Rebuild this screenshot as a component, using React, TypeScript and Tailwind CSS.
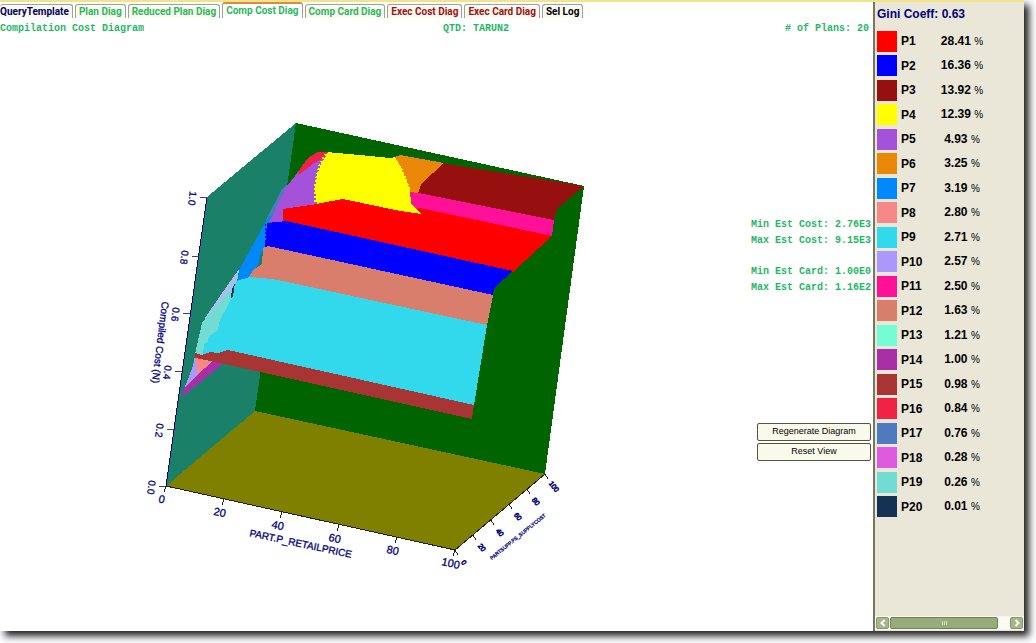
const tabs = [
  { label: "QueryTemplate", color: "text-[#000060]" },
  { label: "Plan Diag", color: "text-[#2eb85c]" },
  { label: "Reduced Plan Diag", color: "text-[#2eb85c]" },
  { label: "Comp Cost Diag", color: "text-[#2eb85c]", active: true },
  { label: "Comp Card Diag", color: "text-[#2eb85c]" },
  { label: "Exec Cost Diag", color: "text-[#a01010]" },
  { label: "Exec Card Diag", color: "text-[#a01010]" },
  { label: "Sel Log", color: "text-black" },
];

const plans = [
  { name: "P1", share: "28.41", swatch: "bg-[#ff0000]" },
  { name: "P2", share: "16.36", swatch: "bg-[#0000ff]" },
  { name: "P3", share: "13.92", swatch: "bg-[#961010]" },
  { name: "P4", share: "12.39", swatch: "bg-[#ffff00]" },
  { name: "P5", share: "4.93", swatch: "bg-[#a352d9]" },
  { name: "P6", share: "3.25", swatch: "bg-[#ea8708]" },
  { name: "P7", share: "3.19", swatch: "bg-[#0088ff]" },
  { name: "P8", share: "2.80", swatch: "bg-[#f78888]" },
  { name: "P9", share: "2.71", swatch: "bg-[#32d9ec]" },
  { name: "P10", share: "2.57", swatch: "bg-[#aa98fa]" },
  { name: "P11", share: "2.50", swatch: "bg-[#ff1098]" },
  { name: "P12", share: "1.63", swatch: "bg-[#d97e6c]" },
  { name: "P13", share: "1.21", swatch: "bg-[#74fcd2]" },
  { name: "P14", share: "1.00", swatch: "bg-[#a82fa8]" },
  { name: "P15", share: "0.98", swatch: "bg-[#a83434]" },
  { name: "P16", share: "0.84", swatch: "bg-[#f02246]" },
  { name: "P17", share: "0.76", swatch: "bg-[#4f7abf]" },
  { name: "P18", share: "0.28", swatch: "bg-[#e05ae0]" },
  { name: "P19", share: "0.26", swatch: "bg-[#72dbd2]" },
  { name: "P20", share: "0.01", swatch: "bg-[#123354]" },
];

const surfaces = [
  // walls and floor
  { fill: "#1a8068", points: "207,197 296,123 255,411 166,486" },
  { fill: "#006400", points: "296,123 584,186 545,474 255,411" },
  { fill: "#808000", points: "166,486 255,411 545,474 455,550" },
  // upper regions
  { fill: "#961010", points: "442,163 584,186 557,209 554,220 418,193 421,184" },
  { fill: "#ea8708", points: "392,158 400,155 444,163 421,184 418,194 408,192" },
  { fill: "#ff0000", points: "283,209 318,203 343,199 420,206 552,236 513,272 300,226 283,222" },
  { fill: "#ff1098", points: "409,192 418,193 554,220 552,236 420,208 416,209 410,203" },
  { fill: "#ffff00", points: "327,152 370,156 390,158 395,157 401,168 406,180 410,190 411,203 421,214 400,211 343,199 316,204 315,190 317,176 321,164" },
  { fill: "#a352d9", points: "288,185 298,172 312,160 326,156 321,164 317,176 315,190 317,204 283,209 283,221 279,223 268,222 268,217 282,190" },
  { fill: "#f02246", points: "297,173 308,158 318,152 328,152 324,158 314,163 300,174" },
  { fill: "#4f7abf", points: "288,183 281,191 266,220 269,223 282,196" },
  { fill: "#0088ff", points: "269,216 240,268 237,282 248,279 252,271 258,265 261,253 266,246 267,223 273,215" },
  { fill: "#0000ff", points: "267,223 287,221 300,224 513,271 494,288 493,296 268,247 265,247" },
  { fill: "#d97e6c", points: "268,246 493,295 487,326 273,280 248,279 253,270 262,264 263,248" },
  { fill: "#72dbd2", points: "237,275 202,323 195,354 206,356 214,340 224,325 236,290" },
  { fill: "#32d9ec", points: "236,281 250,277 273,279 487,325 474,405 237,353 203,354 204,344 208,342 208,337 218,330 220,320 228,305 233,296" },
  { fill: "#a8c0ec", points: "239,269 220,296 203,321 231,290 238,278" },
  { fill: "#123354", points: "235,283 233,297 231,298 232,289" },
  // lower edge
  { fill: "#aa98fa", points: "195,356 193,366 183,392 198,375 199,358" },
  { fill: "#f78888", points: "196,356 216,362 197,377" },
  { fill: "#a82fa8", points: "182,397 184,388 197,375 213,361 224,363" },
  { fill: "#a83434", points: "195,353 201,355 210,352 218,353 227,350 237,352 474,405 472,419 220,363 195,358" },
];

const costTicks = [
  { label: "1.0", x: 207, y: 197 },
  { label: "0.8", x: 199, y: 256 },
  { label: "0.6", x: 190, y: 313 },
  { label: "0.4", x: 182, y: 371 },
  { label: "0.2", x: 174, y: 429 },
  { label: "0.0", x: 166, y: 486 },
];

const priceTicks = [
  { label: "0", x: 166, y: 486 },
  { label: "20", x: 224, y: 499 },
  { label: "40", x: 282, y: 512 },
  { label: "60", x: 339, y: 525 },
  { label: "80", x: 397, y: 537 },
  { label: "100", x: 455, y: 550 },
];

const supplyTicks = [
  { label: "0", x: 455, y: 550 },
  { label: "20", x: 473, y: 535 },
  { label: "40", x: 491, y: 520 },
  { label: "60", x: 509, y: 504 },
  { label: "80", x: 527, y: 489 },
  { label: "100", x: 545, y: 474 },
];

function CostDiagram() {
  return (
    <svg viewBox="0 110 600 470" className="mt-[75px] h-[470px] w-[600px] shrink" role="img" aria-label="Compilation cost diagram">
      <g shapeRendering="crispEdges">
        {surfaces.map((s) => (
          <polygon key={s.points} points={s.points} fill={s.fill} />
        ))}
        <path d="M326 154 L320 165 L317 177 L315 190 L316 203" stroke="#ffff00" strokeWidth="3" strokeDasharray="2 2" fill="none" />
        <path d="M394 159 L401 169 L406 181 L409 190" stroke="#ffff00" strokeWidth="3" strokeDasharray="2 2" fill="none" />
        <path d="M266 224 L265 246" stroke="#0000c8" strokeWidth="1" strokeDasharray="2 2" fill="none" />
        <path d="M207 197 L166 486" stroke="#000080" />
        <path d="M166 486 L455 550 L545 474" stroke="#202020" fill="none" />
        {costTicks.map((t) => (
          <path key={t.label} d={`M${t.x} ${t.y} h-7`} stroke="#404080" />
        ))}
        {priceTicks.map((t) => (
          <path key={t.label} d={`M${t.x} ${t.y} l-2 6`} stroke="#202020" />
        ))}
        {supplyTicks.map((t) => (
          <path key={t.label} d={`M${t.x} ${t.y} l3 5`} stroke="#202020" />
        ))}
      </g>
      <g fill="#000080" stroke="#000080" strokeWidth="0.3" fontFamily="'Liberation Sans', sans-serif" fontSize="10" textAnchor="middle">
        {costTicks.map((t) => (
          <text key={t.label} transform={`translate(${t.x - 18} ${t.y + 1}) rotate(97)`}>{t.label}</text>
        ))}
        {priceTicks.map((t) => (
          <text key={t.label} fontSize="11" transform={`translate(${t.x - 5} ${t.y + 17}) rotate(12)`}>{t.label}</text>
        ))}
        {supplyTicks.map((t) => (
          <text key={t.label} fontSize="7" strokeWidth="0.6" transform={`translate(${t.x + 7} ${t.y + 14}) rotate(52)`}>{t.label}</text>
        ))}
        <text transform="translate(157 342) rotate(97)">Compiled Cost (N)</text>
        <text transform="translate(300 547) rotate(12)">PART.P_RETAILPRICE</text>
        <text fontSize="5" transform="translate(519 538) rotate(-39)">PARTSUPP.PS_SUPPLYCOST</text>
      </g>
    </svg>
  );
}

function Legend() {
  return (
    <aside className="flex w-[151px] shrink-0 flex-col border-l-2 border-[#77775f] bg-[#ebe7d8] pt-1">
      <h2 className="px-[2px] pt-[2px] text-[12px] leading-3 font-bold text-[#000080]">Gini Coeff: 0.63</h2>
      <table className="mt-[9px] h-[490px] w-[112px] border-collapse text-[12px] leading-4 font-bold text-black">
        <tbody>
          {plans.map((p) => (
            <tr key={p.name}>
              <td className="w-[26px] p-0 pl-[2px]">
                <div className={`h-[21px] w-[20px] ${p.swatch}`} />
              </td>
              <th scope="row" className="p-0 text-left">{p.name}</th>
              <td className="w-[50px] p-0 text-center whitespace-nowrap">
                {p.share} <span className="text-[10px] font-normal">%</span>
              </td>
            </tr>
          ))}
        </tbody>
      </table>
      <div className="mt-auto mb-[1px] flex h-[14px] border border-[#f8f8f0] bg-[#fbfbf5]">
        <button aria-label="Scroll left" className="flex w-[13px] items-center justify-center rounded-[2px] border border-[#88986c] bg-[#a5b58c]">
          <svg viewBox="0 0 8 8" className="h-2 w-2"><path d="M5.5 1 L2.5 4 L5.5 7" stroke="#fff" strokeWidth="2" fill="none" /></svg>
        </button>
        <div className="ml-[1px] flex w-[108px] items-center justify-center gap-[1px] rounded-[2px] border border-[#6f8256] bg-[#98ac7b]">
          <span className="h-1 w-px bg-[#d5dfc4]" />
          <span className="h-1 w-px bg-[#d5dfc4]" />
          <span className="h-1 w-px bg-[#d5dfc4]" />
        </div>
        <button aria-label="Scroll right" className="ml-auto flex w-[13px] items-center justify-center rounded-[2px] border border-[#88986c] bg-[#a5b58c]">
          <svg viewBox="0 0 8 8" className="h-2 w-2"><path d="M2.5 1 L5.5 4 L2.5 7" stroke="#fff" strokeWidth="2" fill="none" /></svg>
        </button>
      </div>
    </aside>
  );
}

export default function App() {
  return (
    <div className="flex min-h-screen bg-[#fcfcff] pr-3 pb-3 font-['Liberation_Sans',sans-serif]">
      <div className="flex flex-1 flex-col border-t-2 border-[#f0e58c] bg-white shadow-[5px_5px_7px_#222]">
        <div className="flex flex-1">
          <main className="min-w-0 flex-1">
            <nav className="flex h-4 items-end gap-[2px] font-[Roboto,sans-serif] text-[10px] leading-3 font-bold">
              {tabs.map((t) => (
                <button
                  key={t.label}
                  className={`rounded-t-[3px] border-x border-t px-[3px] whitespace-nowrap first:border-l-0 first:pl-0 ${t.color} ${
                    t.active
                      ? "h-4 border-x-[#a0a098] border-t-2 border-t-[#e08a40] bg-white"
                      : "h-[14px] border-[#a0a098] bg-[#fbfaf0]"
                  }`}
                >
                  {t.label}
                </button>
              ))}
            </nav>

            <header className="grid grid-cols-[16fr_auto_13fr] pt-[5px] pr-1 font-['Liberation_Mono',monospace] text-[10px] leading-3 font-bold text-[#1fb866]">
              <h1>Compilation Cost Diagram</h1>
              <p>QTD: TARUN2</p>
              <p className="text-right"># of Plans: 20</p>
            </header>

            <div className="flex items-start justify-between pr-[2px]">
              <CostDiagram />
              <div className="mt-[182px] flex shrink-0 flex-col">
                <div className="text-right font-['Liberation_Mono',monospace] text-[10px] leading-4 font-bold text-[#1fb866]">
                  <p>Min Est Cost: 2.76E3</p>
                  <p>Max Est Cost: 9.15E3</p>
                  <p className="mt-[15px]">Min Est Card: 1.00E0</p>
                  <p>Max Est Card: 1.16E2</p>
                </div>
                <div className="mt-[127px] flex w-[114px] flex-col gap-[2px] self-end text-[9px] text-black">
                  <button className="h-[18px] rounded-[2px] border border-[#55553c] bg-[#fafaec]">Regenerate Diagram</button>
                  <button className="h-[18px] rounded-[2px] border border-[#55553c] bg-[#fafaec]">Reset View</button>
                </div>
              </div>
            </div>
          </main>
          <Legend />
        </div>
      </div>
    </div>
  );
}
